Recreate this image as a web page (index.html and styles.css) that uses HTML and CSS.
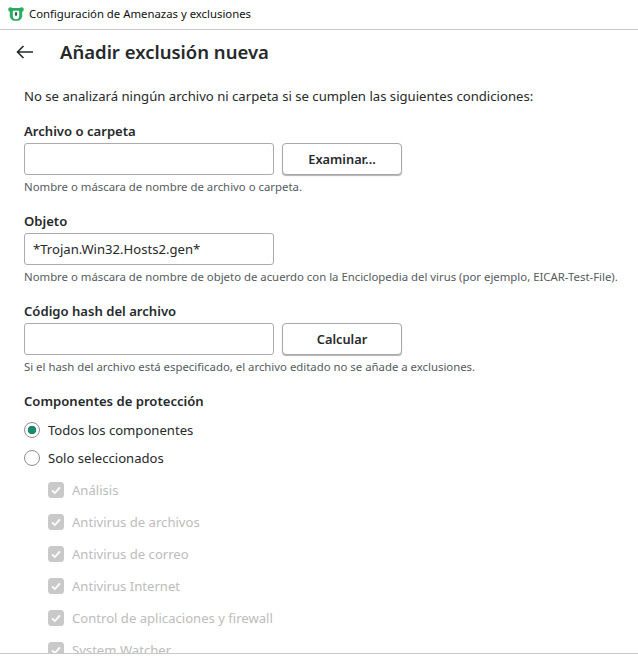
FILE: index.html
```html
<!DOCTYPE html>
<html lang="es">
<head>
<meta charset="utf-8">
<title>Configuración de Amenazas y exclusiones</title>
<link rel="stylesheet" href="styles.css">
</head>
<body>
<div class="window">
  <header class="titlebar">
    <svg class="logo" width="16" height="14" viewBox="0 0 16 14"><circle cx="2.400" cy="2.500" r="2.200" fill="#2bab5e"/><circle cx="13.600" cy="2.500" r="2.200" fill="#2bab5e"/><path fill="#2bab5e" d="M3 1h10l1.200 2.500V8.500c0 3-2.300 5.300-5.200 5.300H7c-2.900 0-5.200-2.300-5.200-5.300V3.500z"/><path fill="#fff" d="M5.800 3.800h4.400c.6 0 1 .4 1 1v4.400c0 1.700-1.300 3-3.200 3s-3.200-1.300-3.200-3V4.800c0-.6.400-1 1-1z"/><path fill="#17603a" d="M6.900 5.300h2.200v2.500c0 .7-.5 1.200-1.100 1.200s-1.100-.5-1.100-1.200z"/></svg>
    <span class="titlebar-text">Configuración de Amenazas y exclusiones</span>
  </header>
  <main class="content">
    <div class="page-head">
      <svg class="back" width="18" height="14" viewBox="0 0 18 14"><path d="M17 7H1.500M7.500 1 1.500 7l6 6" fill="none" stroke="#26292b" stroke-width="1.600"/></svg>
      <h1 class="page-title">Añadir exclusión nueva</h1>
    </div>
    <p class="intro">No se analizará ningún archivo ni carpeta si se cumplen las siguientes condiciones:</p>

    <section class="field">
      <h2 class="label">Archivo o carpeta</h2>
      <div class="input-row">
        <div class="input"></div>
        <button class="btn">Examinar...</button>
      </div>
      <p class="hint">Nombre o máscara de nombre de archivo o carpeta.</p>
    </section>

    <section class="field">
      <h2 class="label">Objeto</h2>
      <div class="input-row">
        <div class="input">*Trojan.Win32.Hosts2.gen*</div>
      </div>
      <p class="hint">Nombre o máscara de nombre de objeto de acuerdo con la Enciclopedia del virus (por ejemplo, EICAR-Test-File).</p>
    </section>

    <section class="field">
      <h2 class="label">Código hash del archivo</h2>
      <div class="input-row">
        <div class="input"></div>
        <button class="btn">Calcular</button>
      </div>
      <p class="hint">Si el hash del archivo está especificado, el archivo editado no se añade a exclusiones.</p>
    </section>

    <section class="field">
      <h2 class="label">Componentes de protección</h2>
      <div class="radio-row"><span class="radio radio-on"></span>Todos los componentes</div>
      <div class="radio-row"><span class="radio"></span>Solo seleccionados</div>
      <ul class="checks">
        <li class="check-row"><svg class="check" viewBox="0 0 16 16"><use href="#box"/></svg>Análisis</li>
        <li class="check-row"><svg class="check" viewBox="0 0 16 16"><use href="#box"/></svg>Antivirus de archivos</li>
        <li class="check-row"><svg class="check" viewBox="0 0 16 16"><use href="#box"/></svg>Antivirus de correo</li>
        <li class="check-row"><svg class="check" viewBox="0 0 16 16"><use href="#box"/></svg>Antivirus Internet</li>
        <li class="check-row"><svg class="check" viewBox="0 0 16 16"><use href="#box"/></svg>Control de aplicaciones y firewall</li>
        <li class="check-row"><svg class="check" viewBox="0 0 16 16"><use href="#box"/></svg>System Watcher</li>
      </ul>
    </section>
  </main>
  <div class="footer"></div>
</div>
<svg class="defs" width="0" height="0"><defs><g id="box"><rect width="16" height="16" rx="3.500" fill="#c9c9c9"/><path d="M4 8.300 6.900 11 12 5.300" fill="none" stroke="#fff" stroke-width="1.800"/></g></defs></svg>
</body>
</html>
```
FILE: styles.css
```css
* { box-sizing: border-box; }
html, body { margin: 0; padding: 0; background: #fff; }
body { font-family: "Noto Sans", "Open Sans", sans-serif; color: #26292b; }
.window { width: 638px; height: 666px; display: flex; flex-direction: column; overflow: hidden; }
.titlebar { height: 30px; flex: none; display: flex; align-items: center; gap: 5px; padding: 0 0 2px 8px; border-bottom: 1px solid #c8c8c8; }
.logo { flex: none; }
.titlebar-text { font-size: 11.35px; color: #111; }
.content { height: 623px; flex: none; overflow: hidden; padding: 0 0 0 24px; }
.page-head { height: 44px; display: flex; align-items: center; margin-left: -8px; }
.back { flex: none; margin-right: 26px; }
.page-title { margin: 0; font-size: 18.5px; font-weight: 600; line-height: 24px; color: #26292b; }
.intro { margin: 13px 0 0; font-size: 13.13px; line-height: 18px; }
.field { margin-top: 17px; }
.label { margin: 0; font-size: 13.1px; font-weight: 600; line-height: 18px; }
.input-row { display: flex; gap: 8px; margin-top: 3px; }
.input { width: 250px; height: 32px; border: 1px solid #ababab; border-radius: 3px; padding: 0 8px; font-size: 13.1px; line-height: 30px; background: #fff; }
.btn { width: 120px; height: 32px; padding: 0; border: 1px solid #a8a8a8; border-radius: 4px; background: #fff; box-shadow: 0 1px 1px rgba(0,0,0,.3); font: 600 12.8px "Noto Sans", sans-serif; color: #26292b; }
.hint { margin: 4px 0 0; font-size: 11.36px; line-height: 16px; color: #545a5e; white-space: nowrap; }
.radio-row { display: flex; align-items: center; gap: 8px; height: 28px; font-size: 13.1px; }
.label + .radio-row { margin-top: 6px; }
.radio { width: 16px; height: 16px; border: 1.500px solid #8c8c8c; border-radius: 50%; flex: none; background: #fff; }
.radio-on { background: radial-gradient(circle, #1d8a70 0 4px, #fff 4.600px); }
.checks { list-style: none; margin: 0; padding: 2px 0 0 24px; }
.check-row { display: flex; align-items: center; gap: 8px; height: 32px; font-size: 13.1px; color: #bcbcbc; }
.check { width: 16px; height: 16px; flex: none; }
.footer { flex: none; height: 13px; border-top: 1px solid #c8c8c8; }
.defs { position: absolute; }
```
